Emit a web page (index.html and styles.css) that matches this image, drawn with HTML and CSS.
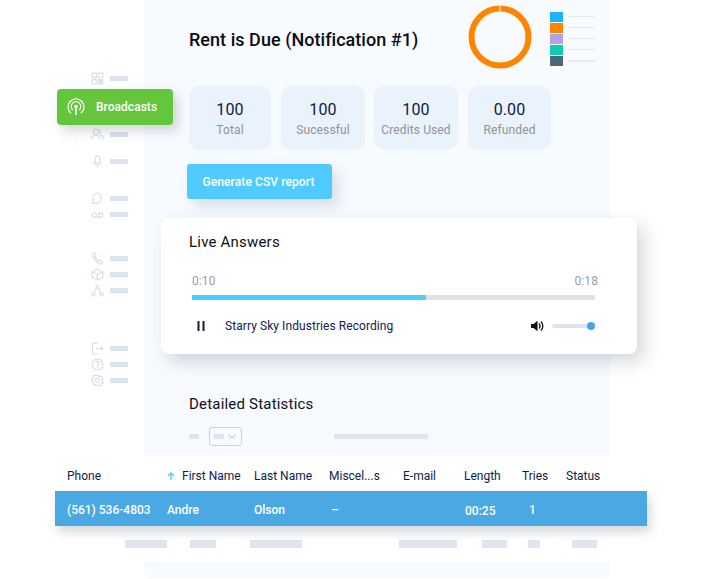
FILE: index.html
```html
<!DOCTYPE html>
<html lang="en">
<head>
<meta charset="utf-8">
<title>Rent is Due</title>
<link rel="stylesheet" href="styles.css">
</head>
<body>
<div class="stage">
  <div class="top">
    <nav class="side">
      <div class="nav-item first"><svg class="ni" viewBox="0 0 12 12"><path d="M1 1h4v4H1zM7 1h4v4H7zM1 7h4v4H1zM7 7h1.500v4H7zM9.500 7H11v4H9.500z"/></svg><i class="bar"></i></div>
      <div class="cast">
        <svg class="cast-ico" viewBox="0 0 18 18"><path d="M4 15.200a8 8 0 1 1 10 0"/><path d="M5.800 12a4.800 4.800 0 1 1 6.400 0"/><circle class="fill" cx="9" cy="8.500" r="1.800"/><path class="stem" d="M9 9v8"/></svg>
        <span>Broadcasts</span>
      </div>
      <div class="nav-item g134"><svg class="ni" viewBox="0 0 12 12"><circle cx="4.500" cy="3.500" r="2.300"/><path d="M.8 10.500c0-5 7.400-5 7.400 0M7.500 1.300a2.300 2.300 0 0 1 0 4.400M9 6.500c1.500.5 2.400 2 2.400 4"/></svg><i class="bar"></i></div>
      <div class="nav-item g161"><svg class="ni" viewBox="0 0 12 12"><rect x="4" y=".8" width="4" height="7" rx="2"/><path d="M2.500 6a3.500 3.500 0 0 0 7 0M6 9.500v2"/></svg><i class="bar"></i></div>
      <div class="nav-item g198"><svg class="ni" viewBox="0 0 12 12"><path d="M6 1a5 5 0 0 1 0 9.500H1.500l.8-2A5 5 0 0 1 6 1z"/></svg><i class="bar"></i></div>
      <div class="nav-item g214"><svg class="ni" viewBox="0 0 12 12"><circle cx="3" cy="6.500" r="2"/><circle cx="9" cy="6.500" r="2"/><path d="M3 8.500h6"/></svg><i class="bar"></i></div>
      <div class="nav-item g258"><svg class="ni" viewBox="0 0 12 12"><path d="M1.500 1.500l2-.7 1.300 2.700-1.100 1c.6 1.800 2 3.300 3.800 4l1.100-1 2.400 1.600-.8 1.900C6 11 1.500 6.500 1.500 1.500z"/></svg><i class="bar"></i></div>
      <div class="nav-item"><svg class="ni" viewBox="0 0 12 12"><path d="M1 3.500L6 1l5 2.500v5L6 11 1 8.500zM1 3.500l5 2.500 5-2.500M6 6v5"/></svg><i class="bar"></i></div>
      <div class="nav-item"><svg class="ni" viewBox="0 0 12 12"><circle cx="6" cy="2.300" r="1.400"/><circle cx="2.300" cy="9.700" r="1.500"/><circle cx="9.700" cy="9.700" r="1.500"/><path d="M5.300 3.500L2.800 8.300M6.700 3.500l2.500 4.800"/></svg><i class="bar"></i></div>
      <div class="nav-item g348"><svg class="ni" viewBox="0 0 12 12"><path d="M6 1H1.500v10H6M4.500 6H11M8.800 3.800L11 6 8.800 8.200"/></svg><i class="bar"></i></div>
      <div class="nav-item"><svg class="ni" viewBox="0 0 12 12"><circle cx="6" cy="6" r="5"/><path d="M4.500 4.700a1.500 1.500 0 1 1 2.300 1.300C6.200 6.400 6 6.700 6 7.300M6 8.400v1"/></svg><i class="bar"></i></div>
      <div class="nav-item"><svg class="ni" viewBox="0 0 12 12"><path d="M6 .8l1.200 1.400 1.900-.2.400 1.800 1.700.9-.8 1.700.8 1.700-1.700.9-.4 1.800-1.900-.2L6 11.200l-1.200-1.400-1.900.2-.4-1.800-1.700-.9.8-1.700-.8-1.700 1.700-.9.400-1.800 1.900.2z"/><circle cx="6" cy="6" r="1.800"/></svg><i class="bar"></i></div>
    </nav>
    <main class="panel">
      <header class="head">
        <h1 class="title">Rent is Due (Notification #1)</h1>
        <svg class="donut" viewBox="0 0 64 64"><circle cx="32" cy="32" r="28.500"/><path d="M32 0v7"/></svg>
        <ul class="legend">
          <li><b class="sw c1"></b><i></i></li>
          <li><b class="sw c2"></b><i></i></li>
          <li><b class="sw c3"></b><i></i></li>
          <li><b class="sw c4"></b><i></i></li>
          <li class="last"><b class="sw c5"></b><i></i></li>
        </ul>
      </header>
      <section class="stats">
        <div class="stat s1"><strong>100</strong><span>Total</span></div>
        <div class="stat s2"><strong>100</strong><span>Sucessful</span></div>
        <div class="stat s3"><strong>100</strong><span>Credits Used</span></div>
        <div class="stat s4"><strong>0.00</strong><span>Refunded</span></div>
      </section>
      <button class="csv">Generate CSV report</button>
      <section class="card">
        <h2 class="card-title">Live Answers</h2>
        <div class="times"><span>0:10</span><span>0:18</span></div>
        <div class="track"><div class="track-fill"></div></div>
        <div class="player">
          <svg class="pause" viewBox="0 0 8 10"><path d="M.5 0h2v10h-2zM5.500 0h2v10h-2z"/></svg>
          <span class="rec">Starry Sky Industries Recording</span>
          <svg class="vol" viewBox="0 0 14 12"><path class="solid" d="M0 4h2.500L6.500 .8v10.400L2.500 8H0z"/><path class="wave" d="M8 3.500a3.500 3.500 0 0 1 0 5M10 1.500a6.500 6.500 0 0 1 0 9"/></svg>
          <div class="slider"><i class="knob"></i></div>
        </div>
      </section>
      <h2 class="detail">Detailed Statistics</h2>
      <div class="filters">
        <i class="fbar a"></i>
        <div class="select"><i class="fbar s"></i><svg class="chev" viewBox="0 0 8 5"><path d="M.5.500L4 4 7.500.500"/></svg></div>
        <i class="fbar b"></i>
      </div>
    </main>
  </div>
  <section class="table">
    <div class="cols thead">
      <span class="c-phone">Phone</span>
      <span class="c-first"><svg class="sort" viewBox="0 0 8 8"><path d="M4 8V1M1 4l3-3 3 3"/></svg>First Name</span>
      <span class="c-last">Last Name</span>
      <span class="c-misc">Miscel...s</span>
      <span class="c-mail">E-mail</span>
      <span class="c-len">Length</span>
      <span class="c-try">Tries</span>
      <span class="c-stat">Status</span>
    </div>
    <div class="cols hl">
      <span class="c-phone">(561) 536-4803</span>
      <span class="c-first">Andre</span>
      <span class="c-last">Olson</span>
      <span class="c-misc dash">–</span>
      <span class="c-mail"></span>
      <span class="c-len t">00:25</span>
      <span class="c-try one">1</span>
      <span class="c-stat"></span>
    </div>
    <div class="ghost">
      <i class="g1"></i><i class="g2"></i><i class="g3"></i><i class="g4"></i><i class="g5"></i><i class="g6"></i><i class="g7"></i>
    </div>
  </section>
  <div class="foot"></div>
</div>
</body>
</html>
```
FILE: styles.css
```css
* { box-sizing: border-box; }
html, body { margin: 0; background: #fff; }
body { font-family: Roboto, "Liberation Sans", sans-serif; overflow: hidden; }
.stage { width: 711px; height: 579px; overflow: hidden; }
.top { display: flex; height: 455px; }

/* sidebar */
.side { width: 144px; flex: none; padding-top: 70px; }
.nav-item { display: flex; align-items: center; height: 16px; margin-left: 91px; gap: 6px; }
.ni { width: 13px; height: 13px; flex: none; fill: none; stroke: #d3ddec; stroke-width: 1; }
.bar { width: 18px; height: 5px; background: #dde3ef; display: block; }
.nav-item.first { margin-bottom: 3px; }
.cast {
  position: relative; z-index: 3; margin: 0 0 0 57px; width: 116px; height: 36px;
  background: #65c63b; border-radius: 4px; display: flex; align-items: center;
  box-shadow: 5px 6px 12px rgba(40,60,80,.2); color: #fff; font-size: 12px; font-weight: 500;
  padding-left: 10px; gap: 11px; letter-spacing: .03px;
}
.cast::after { content: ""; position: absolute; left: 18px; top: 36px; width: 1px; height: 24px; background: linear-gradient(#dfe5ee, #fff); }
.cast-ico { width: 18px; height: 18px; fill: none; stroke: #fff; stroke-width: 1.200; flex: none; }
.cast-ico .fill { fill: #fff; stroke: none; }
.cast-ico .stem { stroke-width: 1.600; }
.g134 { margin-top: 1px; }
.g161 { margin-top: 11px; }
.g198 { margin-top: 21px; }
.g214 { margin-top: 0; }
.g258 { margin-top: 28px; }
.g348 { margin-top: 42px; }

/* panel */
.panel { width: 466px; height: 455px; flex: none; background: #f7fbff; padding: 0 0 0 45px; }
.head { display: flex; height: 86px; align-items: flex-start; }
.title { margin: 29px 0 0; width: 280px; font-size: 18px; line-height: 21px; font-weight: 500; color: #0b0b14; white-space: nowrap; letter-spacing: .04px; }
.donut { width: 64px; height: 64px; margin: 5px 0 0 -1px; flex: none; fill: none; stroke: #ff8400; stroke-width: 6; }
.donut path { stroke: #f7fbff; stroke-width: 1; }
.legend { list-style: none; margin: 11px 0 0 18px; padding: 0; width: 45px; }
.legend li { display: flex; align-items: center; height: 11px; gap: 5px; }
.legend li.last { height: 10px; margin-top: 1px; }
.legend li i { width: 27px; height: 1.500px; background: #e4eaf3; display: block; }
.sw { width: 13px; height: 10px; display: block; flex: none; }
.c1 { background: #1cb4f6; }
.c2 { background: #ff8400; }
.c3 { background: #b1a3e9; }
.c4 { background: #0fcdb0; }
.c5 { background: #4b6779; }

.stats { display: flex; height: 64px; }
.stat { background: #eaf3fc; border-radius: 10px; display: flex; flex-direction: column; align-items: center; padding-top: 14px; }
.stat strong { font-size: 16px; line-height: 20px; font-weight: 400; color: #0c1a48; letter-spacing: .1px; }
.stat span { font-size: 12px; line-height: 18px; margin-top: 1px; color: #8f9298; white-space: nowrap; letter-spacing: .12px; }
.s1 { width: 82px; margin-right: 10px; }
.s2 { width: 84px; margin-right: 9px; }
.s3 { width: 84px; margin-right: 10px; }
.s4 { width: 83px; }

.csv {
  display: block; margin: 14px 0 0 -2px; width: 145px; height: 35px; border: 0; border-radius: 3px;
  background: #4fcbff; color: #fff; font: 500 12px Roboto, sans-serif; padding: 0 2px 0 0; letter-spacing: .1px;
  box-shadow: 6px 7px 14px rgba(40,60,90,.16);
}
.card {
  position: relative; margin: 19px 0 0 -28px; width: 476px; height: 136px; background: #fff; border-radius: 8px;
  box-shadow: 7px 8px 18px rgba(40,60,80,.2); padding: 15px 42px 0 31px;
}
.card-title { margin: 0 0 0 -3px; font-size: 15px; line-height: 18px; font-weight: 400; color: #0f0f16; letter-spacing: .2px; }
.times { display: flex; justify-content: space-between; margin: 23px -3px 0 0; font-size: 12px; line-height: 14px; color: #9a9da3; letter-spacing: .1px; }
.track { margin-top: 7px; height: 5px; background: #dde2ea; }
.track-fill { width: 234px; height: 5px; background: #4fcbff; }
.player { display: flex; align-items: center; margin-top: 17px; height: 18px; }
.pause { width: 8px; height: 10px; margin-left: 5px; fill: #15193a; flex: none; }
.rec { margin-left: 20px; font-size: 12px; color: #14204e; width: 306px; white-space: nowrap; letter-spacing: .07px; }
.vol { width: 14px; height: 12px; flex: none; }
.vol .solid { fill: #111; }
.vol .wave { fill: none; stroke: #111; stroke-width: 1.300; }
.slider { position: relative; margin-left: 7px; width: 43px; height: 4px; border-radius: 2px; background: #dde3ec; }
.knob { position: absolute; right: 0; top: -2px; width: 8px; height: 8px; border-radius: 50%; background: #45a5e4; }

.detail { margin: 41px 0 0; font-size: 15px; line-height: 18px; font-weight: 400; color: #0f0f16; letter-spacing: .2px; }
.filters { display: flex; align-items: center; margin-top: 14px; height: 19px; }
.fbar { display: block; height: 5px; background: #dde3ef; }
.fbar.a { width: 10px; }
.select { display: flex; align-items: center; margin-left: 10px; width: 33px; height: 19px; border: 1px solid #ccd2da; border-radius: 3px; padding-left: 4px; }
.fbar.s { width: 10px; }
.chev { width: 8px; height: 5px; margin-left: 4px; fill: none; stroke: #b9c0ca; stroke-width: 1; }
.fbar.b { width: 94px; margin-left: 92px; }

/* table */
.table { margin-left: 55px; width: 598px; height: 107px; background: #fff; }
.cols { display: grid; grid-template-columns: 100px 87px 75px 74px 61px 58px 44px 81px; padding-left: 12px; font-size: 12px; white-space: nowrap; }
.thead { height: 36px; align-items: center; color: #101c4a; padding-top: 5px; }
.c-first { display: flex; align-items: center; }
.sort { width: 8px; height: 8px; margin-right: 7px; fill: none; stroke: #4fcbff; stroke-width: 1.300; flex: none; }
.hl {
  position: relative; width: 592px; height: 35px; align-items: center; color: #fff; background: #4aa8e2; font-weight: 500;
  padding-top: 2px; box-shadow: 3px 6px 10px rgba(40,60,80,.2);
}
.dash { padding-left: 2px; }
.t { padding: 2px 0 0 1px; }
.one { padding-left: 7px; }
.ghost { display: flex; align-items: center; height: 36px; padding: 0 0 0 70px; }
.ghost i { display: block; height: 8px; background: #e0e5f0; }
.g1 { width: 42px; }
.g2 { width: 26px; margin-left: 23px; }
.g3 { width: 52px; margin-left: 34px; }
.g4 { width: 58px; margin-left: 97px; }
.g5 { width: 25px; margin-left: 25px; }
.g6 { width: 12px; margin-left: 21px; }
.g7 { width: 25px; margin-left: 32px; }
.foot { margin-left: 144px; width: 466px; height: 16px; background: #f7fbff; border-radius: 0 0 6px 6px; }
```
